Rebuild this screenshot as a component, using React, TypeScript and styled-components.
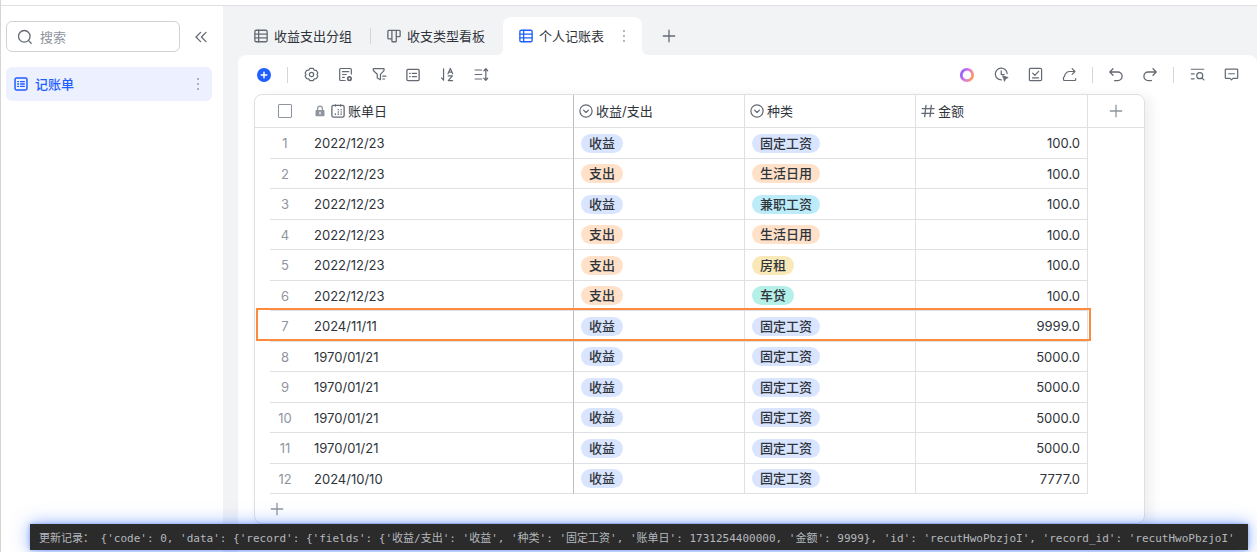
import React from "react";
import styled, { createGlobalStyle, css } from "styled-components";

const colors = {
  line: "#dee0e3",
  icon: "#646a73",
  text: "#2f343b",
  muted: "#8f959e",
  blue: "#1f5eff",
  canvas: "#f2f3f5",
};

const GlobalStyle = createGlobalStyle`
  * { box-sizing: border-box; }
  body {
    margin: 0;
    background: #fff;
    color: ${colors.text};
    font-family: Inter, "Noto Sans CJK SC", sans-serif;
    font-size: 13px;
    line-height: 20px;
  }
  button, input { font: inherit; color: inherit; }
`;

const Page = styled.div`
  position: relative;
  display: flex;
  flex-direction: column;
  min-height: 100vh;
  overflow: hidden;
  border-left: 1px solid #d4d5d7;
`;

const TopEdge = styled.div`
  height: 6px;
  border-bottom: 1px solid ${colors.line};
`;

const Body = styled.div`
  flex: 1;
  display: flex;
`;

const Sidebar = styled.aside`
  flex: none;
  width: 222px;
  padding: 15px 11px 0 5px;
`;

const SearchRow = styled.div`
  display: flex;
  align-items: center;
  gap: 13px;
  margin-bottom: 15px;
`;

const SearchBox = styled.label`
  flex: 1;
  min-width: 0;
  display: flex;
  align-items: center;
  gap: 7px;
  height: 31px;
  padding: 0 10px;
  border: 1px solid #d0d3d6;
  border-radius: 6px;
  color: ${colors.icon};
`;

const SearchInput = styled.input`
  flex: 1;
  min-width: 0;
  padding: 0;
  border: 0;
  outline: 0;
  background: none;
  &::placeholder { color: ${colors.muted}; opacity: 1; }
`;

const IconButton = styled.button`
  flex: none;
  display: flex;
  align-items: center;
  justify-content: center;
  width: 16px;
  height: 16px;
  padding: 0;
  border: 0;
  background: none;
  color: ${colors.icon};
  cursor: pointer;
`;

const CollapseButton = styled(IconButton)`
  margin-right: 3px;
`;

const MenuButton = styled(IconButton)`
  color: ${colors.muted};
`;

const NavItem = styled.div`
  display: flex;
  align-items: center;
  height: 34px;
  padding: 0 6px 0 8px;
  border-radius: 6px;
  background: #edf1ff;
`;

const NavLink = styled.a`
  flex: 1;
  display: flex;
  align-items: center;
  gap: 7px;
  color: ${colors.blue};
  font-weight: 500;
  text-decoration: none;
`;

const Main = styled.main`
  flex: 1;
  min-width: 0;
  display: flex;
  flex-direction: column;
  padding: 11px 0 0 15px;
  background: ${colors.canvas};
`;

const TabBar = styled.nav`
  display: flex;
  align-items: center;
  height: 38px;
`;

const TabShell = styled.div<{ $active?: boolean }>`
  position: relative;
  display: flex;
  align-items: center;
  height: 38px;
  padding: 0 ${(p) => (p.$active ? 10 : 18)}px 0 16px;
  color: ${colors.icon};
  ${(p) =>
    p.$active &&
    css`
      border-radius: 8px 8px 0 0;
      background: #fff;
      &::before,
      &::after {
        content: "";
        position: absolute;
        bottom: 0;
        width: 6px;
        height: 6px;
      }
      &::before {
        right: 100%;
        background: radial-gradient(circle at 0 0, ${colors.canvas} 6px, #fff 6px);
      }
      &::after {
        left: 100%;
        background: radial-gradient(circle at 100% 0, ${colors.canvas} 6px, #fff 6px);
      }
    `}
`;

const TabButton = styled.button<{ $active?: boolean }>`
  display: flex;
  align-items: center;
  gap: 6px;
  padding: 0;
  border: 0;
  background: none;
  color: ${colors.text};
  cursor: pointer;
  svg { color: ${(p) => (p.$active ? colors.blue : colors.icon)}; }
`;

const TabMenu = styled(MenuButton)`
  margin-left: 12px;
`;

const AddTab = styled(IconButton)`
  margin-left: 19px;
`;

const Divider = styled.span<{ $gap?: number }>`
  flex: none;
  width: 1px;
  height: 16px;
  margin: 0 ${(p) => p.$gap ?? 0}px;
  background: #d4d6d9;
`;

const Panel = styled.section`
  flex: 1;
  padding: 0 18px 0 16px;
  border-radius: 8px 8px 0 0;
  background: #fff;
`;

const Toolbar = styled.div`
  display: flex;
  align-items: center;
  justify-content: space-between;
  height: 39px;
  padding-left: 2px;
`;

const ToolSection = styled.div`
  display: flex;
  align-items: center;
`;

const ToolGroup = styled.div`
  display: flex;
  align-items: center;
  gap: 18px;
`;

const Sheet = styled.div`
  width: fit-content;
  border: 1px solid ${colors.line};
  border-radius: 8px;
  box-shadow: 6px 2px 12px rgba(31, 35, 41, 0.07);
`;

const Grid = styled.table`
  width: 889px;
  table-layout: fixed;
  border-collapse: separate;
  border-spacing: 0;
`;

const Col = styled.col<{ $w: number }>`
  width: ${(p) => p.$w}px;
`;

const cellBorders = css<{ $edge?: "none" | "soft" | "frozen"; $noBottom?: boolean }>`
  border: 0 solid ${colors.line};
  border-bottom-width: ${(p) => (p.$noBottom ? 0 : 1)}px;
  border-right-width: ${(p) => (p.$edge && p.$edge !== "none" ? 1 : 0)}px;
  border-right-color: ${(p) => (p.$edge === "frozen" ? "#bbbfc4" : colors.line)};
`;

const HeadCell = styled.th<{ $edge?: "none" | "soft" | "frozen" }>`
  ${cellBorders}
  height: 33px;
  padding: 0 0 0 5px;
  font-weight: 400;
  text-align: left;
`;

const DateHead = styled(HeadCell)`
  padding-left: 14px;
`;

const CenterHead = styled(HeadCell)`
  padding: 0;
`;

const HeadLabel = styled.div`
  display: flex;
  align-items: center;
  gap: 3px;
  svg { color: ${colors.icon}; }
`;

const LockMark = styled.span`
  display: flex;
  margin-right: 2px;
  && svg { color: ${colors.muted}; }
`;

const Centered = styled.div`
  display: flex;
  justify-content: center;
`;

const Check = styled.input`
  appearance: none;
  width: 14px;
  height: 14px;
  margin: 0;
  border: 1px solid ${colors.muted};
  border-radius: 1px;
  background: #fff;
`;

const Row = styled.tr<{ $marked?: boolean }>`
  position: relative;
  height: 30px;
  &:nth-child(odd) { height: 31px; }
  ${(p) =>
    p.$marked &&
    css`
      &::after {
        content: "";
        position: absolute;
        inset: -3px 53px 1px 1px;
        border: 2px solid #ff8a3d;
        pointer-events: none;
      }
    `}
`;

const Cell = styled.td<{ $edge?: "none" | "soft" | "frozen"; $noBottom?: boolean }>`
  ${cellBorders}
  padding: 0 7px;
`;

const IndexCell = styled(Cell)`
  padding: 0;
  color: ${colors.muted};
  text-align: center;
`;

const DateCell = styled(Cell)`
  padding-left: 14px;
`;

const AmountCell = styled(Cell)`
  text-align: right;
`;

type Tone = "blue" | "orange" | "cyan" | "yellow" | "teal";
const tones: Record<Tone, string> = {
  blue: "#d9e4ff",
  orange: "#ffe1c9",
  cyan: "#bcecfa",
  yellow: "#fae9b8",
  teal: "#b4f0e8",
};

const Pill = styled.span<{ $tone: Tone }>`
  display: block;
  width: fit-content;
  height: 19px;
  padding: 0 8px;
  border-radius: 10px;
  background: ${(p) => tones[p.$tone]};
  font-weight: 500;
  line-height: 19px;
`;

const AddRow = styled.div`
  display: flex;
  align-items: center;
  height: 29px;
  padding-left: 14px;
`;

const LogBar = styled.pre`
  position: absolute;
  left: 29px;
  right: 9px;
  bottom: 2px;
  height: 26px;
  margin: 0;
  padding: 6px 0 0 9px;
  overflow: hidden;
  background: #2b2b2b;
  color: #b4b8bd;
  font-family: "DejaVu Sans Mono", "Noto Sans CJK SC", monospace;
  font-size: 11px;
  line-height: 18px;
  white-space: pre;
`;

const LogGlow = styled.div`
  position: absolute;
  left: 29px;
  right: 9px;
  bottom: 2px;
  height: 26px;
  box-shadow: 0 0 4px rgba(51, 102, 230, 0.5), 0 0 18px rgba(51, 112, 255, 0.55);
`;

type IconProps = { size?: number; children: React.ReactNode };
const Icon = ({ size = 16, children }: IconProps) => (
  <svg
    width={size}
    height={size}
    viewBox="0 0 16 16"
    fill="none"
    stroke="currentColor"
    strokeWidth="1.3"
    strokeLinecap="round"
    strokeLinejoin="round"
    aria-hidden="true"
  >
    {children}
  </svg>
);

const SearchIcon = () => (
  <Icon><circle cx="7.3" cy="7.3" r="5.8" /><path d="M11.6 11.6l2.600 2.600" /></Icon>
);
const CollapseIcon = () => (
  <Icon><path d="M7.6 3.4L3 8l4.6 4.6M13 3.4L8.4 8l4.6 4.6" /></Icon>
);
const DotsIcon = () => (
  <Icon>
    <g fill="currentColor" stroke="none">
      <circle cx="8" cy="3" r=".9" /><circle cx="8" cy="8" r=".9" /><circle cx="8" cy="13" r=".9" />
    </g>
  </Icon>
);
const BaseIcon = () => (
  <Icon size={14}>
    <rect x="1.2" y="1.2" width="13.6" height="13.6" rx="1.6" strokeWidth="1.7" />
    <path d="M4.2 5.2h1M7.5 5.2h4.3M4.2 8h1M7.5 8h4.3M4.2 10.8h1M7.5 10.8h4.3" strokeWidth="1.5" />
  </Icon>
);
const GridIcon = () => (
  <Icon size={14}>
    <rect x="1" y="1.4" width="14" height="13.2" rx="1.5" strokeWidth="1.5" />
    <path d="M5.3 1.4v13.2M1 5.8h14M1 10.2h14" strokeWidth="1.5" />
  </Icon>
);
const BoardIcon = () => (
  <Icon size={14}>
    <path d="M2 1.6h12q1 0 1 1v5.2q0 1-1 1h-3.4M5.6 11.2H2q-1 0-1-1V2.6q0-1 1-1M5.6 1.6v12q0 1 1 1h3q1 0 1-1v-12" strokeWidth="1.5" />
  </Icon>
);
const PlusIcon = () => (
  <Icon><path d="M8 1.8v12.4M1.8 8h12.4" strokeLinecap="butt" /></Icon>
);
const AddRecordIcon = () => (
  <Icon>
    <circle cx="8" cy="8" r="7" fill={colors.blue} stroke="none" />
    <path d="M8 5.2v5.6M5.2 8h5.6" stroke="#fff" strokeWidth="1.5" />
  </Icon>
);
const GearIcon = () => (
  <Icon size={15}>
    <path d="M6.3 1.5h3.4l1.2 1.9 2.2.1 1.7 2.9L13.8 8l1 1.700-1.700 2.800-2.200.1-1.200 1.900H6.300l-1.200-1.900-2.200-.1-1.700-2.800 1-1.700-1-1.600 1.700-2.900 2.200-.1z" />
    <circle cx="8" cy="8" r="2.300" />
  </Icon>
);
const FieldEditIcon = () => (
  <Icon size={15}>
    <path d="M14.200 7.500V2.600q0-1-1-1H2.800q-1 0-1 1v10.800q0 1 1 1h4.800M4.800 5h6.600M4.800 8h4M4.800 11h2" />
    <circle cx="12.200" cy="12.400" r="1.800" strokeWidth="1.800" />
  </Icon>
);
const FilterIcon = () => (
  <Icon size={15}>
    <path d="M1.400 1.800h11.400v2L9 7.800v5.800l-3.400-1.800v-4L1.400 3.800zM11.400 9.800h3.400M11.400 12.800h2" />
  </Icon>
);
const FormIcon = () => (
  <Icon size={14}>
    <rect x="1" y="1.600" width="14" height="12.800" rx="1.200" strokeWidth="1.500" />
    <path d="M4.200 6.200h.6M7.200 6.200h4.800M4.200 9.800h.6M7.200 9.800h4.800" strokeWidth="1.500" />
  </Icon>
);
const SortIcon = () => (
  <Icon size={15}>
    <path d="M3.800 2v12L1.600 11.600M8.500 7.200L11 1.500l2.500 5.700M9.300 5.500h3.400M8.800 9.500h4.400l-4.400 5h4.600" />
  </Icon>
);
const RowHeightIcon = () => (
  <Icon size={15}>
    <path d="M1.200 3.200h7M1.200 8h7M1.200 12.800h7M12.600 2v12M10.600 4l2-2.200 2 2.200M10.600 12l2 2.200 2-2.200" />
  </Icon>
);
const RingIcon = () => (
  <Icon>
    <defs>
      <linearGradient id="ring" x1="0" y1="0.3" x2="1" y2="0.7">
        <stop offset="0" stopColor="#9a5cff" />
        <stop offset=".5" stopColor="#dc7be0" />
        <stop offset="1" stopColor="#ff9a62" />
      </linearGradient>
    </defs>
    <circle cx="8" cy="8" r="5.700" stroke="url(#ring)" strokeWidth="2.800" />
  </Icon>
);
const AutomateIcon = () => (
  <Icon size={15}>
    <path d="M14 7A6.300 6.300 0 1 0 7.800 13.800M7.700 4v4h3.200" />
    <path d="M9.300 9.300l5.800 2-2.600 1.100-1.100 2.600z" fill="currentColor" strokeWidth=".8" />
  </Icon>
);
const CheckBoxIcon = () => (
  <Icon size={15}>
    <rect x="1.500" y="1.500" width="13" height="13" rx="1.200" />
    <path d="M5 6.600l2.300 2.300 4-4.300M4.800 11.600h6.400" />
  </Icon>
);
const ShareIcon = () => (
  <Icon size={15}>
    <path d="M1.600 10.800v2.600q0 1 1 1h11q1 0 1-1v-1M2.600 10.400q.8-5.600 6-5.600h5.200M10.800 1.800l3 3-3 3" />
  </Icon>
);
const UndoIcon = () => (
  <Icon><path d="M5 1.800L1.800 5 5 8.200M2 5h7.800a4.300 4.300 0 0 1 0 8.600H6.600" /></Icon>
);
const RedoIcon = () => (
  <Icon><path d="M11 1.800L14.200 5 11 8.200M14 5H6.200a4.300 4.300 0 0 0 0 8.600h3.200" /></Icon>
);
const FindIcon = () => (
  <Icon size={15}>
    <path d="M1.400 2.400h13.200M1.400 7.400h3M1.400 12.600h3" />
    <circle cx="10.400" cy="9.200" r="3.200" /><path d="M12.800 11.600l2 2.200" />
  </Icon>
);
const CommentIcon = () => (
  <Icon size={15}>
    <path d="M2.200 2.200h11.600q.8 0 .8.800v8.400q0 .8-.8.800H9.600L8 13.800l-1.600-1.600H2.200q-.8 0-.8-.8V3q0-.8.8-.8zM5 7.200h6" />
  </Icon>
);
const LockIcon = () => (
  <Icon size={12}>
    <rect x="2" y="6.600" width="12" height="8.400" rx="1" fill="currentColor" stroke="none" />
    <path d="M4.800 7V4.600a3.200 3.200 0 0 1 6.400 0V7" strokeWidth="1.600" />
    <path d="M8 9.500v2.400" stroke="#fff" strokeWidth="1.500" />
  </Icon>
);
const CalendarIcon = () => (
  <Icon size={14}>
    <rect x="1" y="1.600" width="14" height="13.400" rx="1.800" strokeWidth="1.500" />
    <path d="M5 1v1.400M11 1v1.400M11.600 6.500v.1M8.300 6.500v.1M11.600 9v.1M8.300 9v.1M5 11.500v.1M8.300 11.500v.1M11.600 11.500v.1" strokeWidth="1.700" />
  </Icon>
);
const SelectIcon = () => (
  <Icon size={14}>
    <circle cx="8" cy="8" r="7" strokeWidth="1.400" />
    <path d="M5.200 7l2.800 2.600L10.800 7" strokeWidth="1.500" />
  </Icon>
);
const NumberIcon = () => (
  <Icon size={14}>
    <path d="M5.700 1.500L4.200 14.500M11.800 1.500l-1.500 13M1.400 5.200h13.600M1 10.800h13.600" strokeWidth="1.500" />
  </Icon>
);

const categoryTone: Record<string, Tone> = {
  收益: "blue",
  支出: "orange",
  固定工资: "blue",
  生活日用: "orange",
  兼职工资: "cyan",
  房租: "yellow",
  车贷: "teal",
};

const records: [string, string, string, string][] = [
  ["2022/12/23", "收益", "固定工资", "100.0"],
  ["2022/12/23", "支出", "生活日用", "100.0"],
  ["2022/12/23", "收益", "兼职工资", "100.0"],
  ["2022/12/23", "支出", "生活日用", "100.0"],
  ["2022/12/23", "支出", "房租", "100.0"],
  ["2022/12/23", "支出", "车贷", "100.0"],
  ["2024/11/11", "收益", "固定工资", "9999.0"],
  ["1970/01/21", "收益", "固定工资", "5000.0"],
  ["1970/01/21", "收益", "固定工资", "5000.0"],
  ["1970/01/21", "收益", "固定工资", "5000.0"],
  ["1970/01/21", "收益", "固定工资", "5000.0"],
  ["2024/10/10", "收益", "固定工资", "7777.0"],
];
const updatedRecord = 6;

const leftTools: [string, React.ReactNode][] = [
  ["设置", <GearIcon />],
  ["字段配置", <FieldEditIcon />],
  ["筛选", <FilterIcon />],
  ["分组", <FormIcon />],
  ["排序", <SortIcon />],
  ["行高", <RowHeightIcon />],
];
const rightTools: [string, React.ReactNode][][] = [
  [
    ["智能助手", <RingIcon />],
    ["自动化", <AutomateIcon />],
    ["生成表单", <CheckBoxIcon />],
    ["分享", <ShareIcon />],
  ],
  [
    ["撤销", <UndoIcon />],
    ["重做", <RedoIcon />],
  ],
  [
    ["查找", <FindIcon />],
    ["评论", <CommentIcon />],
  ],
];

const Tools = ({ items }: { items: [string, React.ReactNode][] }) => (
  <ToolGroup>
    {items.map(([label, icon]) => (
      <IconButton key={label} aria-label={label}>{icon}</IconButton>
    ))}
  </ToolGroup>
);

const logLine =
  "更新记录： {'code': 0, 'data': {'record': {'fields': {'收益/支出': '收益', '种类': '固定工资', '账单日': 1731254400000, '金额': 9999}, 'id': 'recutHwoPbzjoI', 'record_id': 'recutHwoPbzjoI'";

export default function App() {
  return (
    <Page>
      <GlobalStyle />
      <TopEdge />
      <Body>
        <Sidebar>
          <SearchRow>
            <SearchBox>
              <SearchIcon />
              <SearchInput type="text" placeholder="搜索" aria-label="搜索" />
            </SearchBox>
            <CollapseButton aria-label="收起侧栏"><CollapseIcon /></CollapseButton>
          </SearchRow>
          <NavItem>
            <NavLink href="#ledger"><BaseIcon />记账单</NavLink>
            <MenuButton aria-label="更多"><DotsIcon /></MenuButton>
          </NavItem>
        </Sidebar>
        <Main>
          <TabBar>
            <TabShell><TabButton><GridIcon />收益支出分组</TabButton></TabShell>
            <Divider />
            <TabShell><TabButton><BoardIcon />收支类型看板</TabButton></TabShell>
            <TabShell $active>
              <TabButton $active><GridIcon />个人记账表</TabButton>
              <TabMenu aria-label="视图菜单"><DotsIcon /></TabMenu>
            </TabShell>
            <AddTab aria-label="新建视图"><PlusIcon /></AddTab>
          </TabBar>
          <Panel>
            <Toolbar>
              <ToolSection>
                <IconButton aria-label="添加记录"><AddRecordIcon /></IconButton>
                <Divider $gap={15} />
                <Tools items={leftTools} />
              </ToolSection>
              <ToolSection>
                {rightTools.map((items, i) => (
                  <React.Fragment key={i}>
                    {i > 0 && <Divider $gap={15} />}
                    <Tools items={items} />
                  </React.Fragment>
                ))}
              </ToolSection>
            </Toolbar>
            <Sheet>
              <Grid>
                <colgroup>
                  <Col $w={15} /><Col $w={30} /><Col $w={274} /><Col $w={171} />
                  <Col $w={171} /><Col $w={172} /><Col $w={56} />
                </colgroup>
                <thead>
                  <tr>
                    <HeadCell />
                    <CenterHead>
                      <Centered><Check type="checkbox" aria-label="全选" /></Centered>
                    </CenterHead>
                    <DateHead $edge="frozen">
                      <HeadLabel><LockMark><LockIcon /></LockMark><CalendarIcon />账单日</HeadLabel>
                    </DateHead>
                    <HeadCell $edge="soft"><HeadLabel><SelectIcon />收益/支出</HeadLabel></HeadCell>
                    <HeadCell $edge="soft"><HeadLabel><SelectIcon />种类</HeadLabel></HeadCell>
                    <HeadCell $edge="soft"><HeadLabel><NumberIcon />金额</HeadLabel></HeadCell>
                    <CenterHead>
                      <Centered><MenuButton aria-label="添加字段"><PlusIcon /></MenuButton></Centered>
                    </CenterHead>
                  </tr>
                </thead>
                <tbody>
                  {records.map(([date, flow, kind, amount], i) => (
                    <Row key={i} $marked={i === updatedRecord}>
                      <Cell $noBottom />
                      <IndexCell>{i + 1}</IndexCell>
                      <DateCell $edge="frozen">{date}</DateCell>
                      <Cell $edge="soft"><Pill $tone={categoryTone[flow]}>{flow}</Pill></Cell>
                      <Cell $edge="soft"><Pill $tone={categoryTone[kind]}>{kind}</Pill></Cell>
                      <AmountCell $edge="soft">{amount}</AmountCell>
                      <Cell $noBottom />
                    </Row>
                  ))}
                </tbody>
              </Grid>
              <AddRow>
                <MenuButton aria-label="添加一行"><PlusIcon /></MenuButton>
              </AddRow>
            </Sheet>
          </Panel>
        </Main>
      </Body>
      <LogGlow />
      <LogBar>{logLine}</LogBar>
    </Page>
  );
}
